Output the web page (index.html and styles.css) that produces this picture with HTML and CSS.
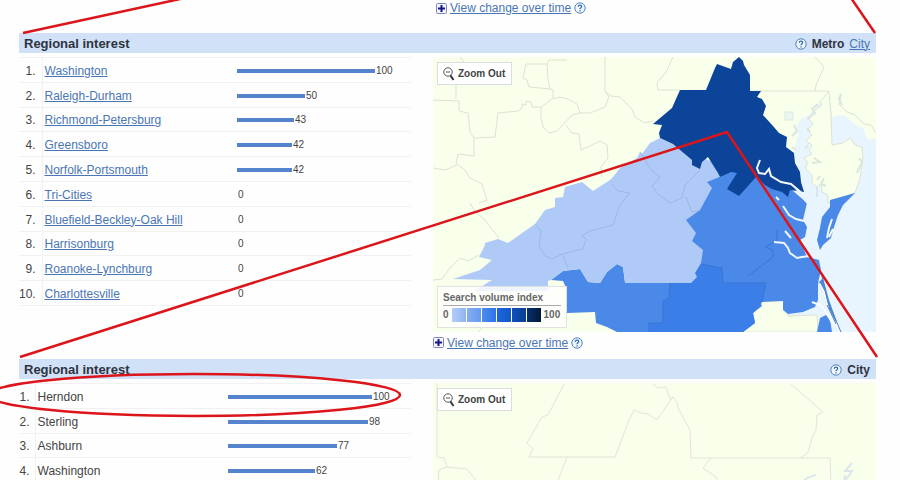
FILE: index.html
```html
<!DOCTYPE html>
<html lang="en">
<head>
<meta charset="utf-8">
<title>Regional interest</title>
<link rel="stylesheet" href="styles.css">
</head>
<body>
<svg class="defs" aria-hidden="true">
  <symbol id="plus" viewBox="0 0 11 11"><rect x=".5" y=".5" width="10" height="10" rx="1" fill="#f4f6ff" stroke="#7b86bd"/><path d="M5.5 2v7M2 5.5h7" stroke="#14148c" stroke-width="2"/></symbol>
  <symbol id="help" viewBox="0 0 12 12"><circle cx="6" cy="6" r="5.2" fill="#eef7ff" stroke="#5585b8"/><path d="M4.3 4.7C4.3 2.6 7.7 2.7 7.7 4.6 7.7 5.8 6 5.8 6 7.3M6 8.3v1.3" fill="none" stroke="#2f68a8" stroke-width="1.2"/></symbol>
  <symbol id="lens" viewBox="0 0 12 14"><circle cx="5" cy="5" r="4.2" fill="#fff" stroke="#555"/><path d="M3 5h4" stroke="#555"/><path d="M7.5 8.5l3 4.5" stroke="#333" stroke-width="2"/></symbol>
</svg>
<main class="page">
  <div class="change change-top">
    <svg class="plus"><use href="#plus"/></svg><a href="#over-time">View change over time</a><svg class="help"><use href="#help"/></svg>
  </div>

  <section>
    <header class="bar-head">
      <h2>Regional interest</h2>
      <div class="scope"><svg class="help"><use href="#help"/></svg><b>Metro</b> <a href="#city">City</a></div>
    </header>
    <div class="columns">
      <table class="ranks metro">
        <tr><td class="n">1.</td><td class="name"><a href="#r1">Washington</a></td><td><div class="value"><i style="width:138px"></i>100</div></td></tr>
        <tr><td class="n">2.</td><td class="name"><a href="#r2">Raleigh-Durham</a></td><td><div class="value"><i style="width:68px"></i>50</div></td></tr>
        <tr><td class="n">3.</td><td class="name"><a href="#r3">Richmond-Petersburg</a></td><td><div class="value"><i style="width:57px"></i>43</div></td></tr>
        <tr><td class="n">4.</td><td class="name"><a href="#r4">Greensboro</a></td><td><div class="value"><i style="width:55px"></i>42</div></td></tr>
        <tr><td class="n">5.</td><td class="name"><a href="#r5">Norfolk-Portsmouth</a></td><td><div class="value"><i style="width:55px"></i>42</div></td></tr>
        <tr><td class="n">6.</td><td class="name"><a href="#r6">Tri-Cities</a></td><td><div class="value"><i style="width:0px"></i>0</div></td></tr>
        <tr><td class="n">7.</td><td class="name"><a href="#r7">Bluefield-Beckley-Oak Hill</a></td><td><div class="value"><i style="width:0px"></i>0</div></td></tr>
        <tr><td class="n">8.</td><td class="name"><a href="#r8">Harrisonburg</a></td><td><div class="value"><i style="width:0px"></i>0</div></td></tr>
        <tr><td class="n">9.</td><td class="name"><a href="#r9">Roanoke-Lynchburg</a></td><td><div class="value"><i style="width:0px"></i>0</div></td></tr>
        <tr><td class="n">10.</td><td class="name"><a href="#r10">Charlottesville</a></td><td><div class="value"><i style="width:0px"></i>0</div></td></tr>
      </table>
      <div>
        <div class="map">
          <svg class="land" viewBox="433 57 443 275" role="img" aria-label="Search volume by metro area">
            <rect x="433" y="57" width="443" height="275" fill="#f8ffea"/>
            <g fill="none" stroke="#dce3d3">
              <path d="M433 100L459 101 459 111 468 113 470 132 474 138 495 137 498 113 518 111 522 108 522 104 526 105 526 101 531 102 532 107 541 107 552 99M456 89L456 99M456 89L456 82M526 64L523 78 527 80 529 87 550 89 548 79 547 64ZM547 64L549 60 567 60M550 89L553 90 553 99 559 97 568 99 577 104 580 113 572 115 557 131 549 133 543 127 541 118 541 107M605 57L605 91 611 96 620 97 632 109 635 117 644 123 653 121M605 91L609 97 605 107 590 113 580 113"/>
              <path d="M566 125L572 133 579 134 581 150 592 145 600 141 607 145 608 158 601 167 602 177M474 138L474 156 458 154 456 163 465 170 470 178 482 184 487 200 479 203M433 168L445 170 457 165M470 203L475 212 483 218 499 238M433 280L442 279 450 268 460 258 468 261 479 255M673 57L666 72 657 83 658 90 680 90M750 91L828 91 831 115 832 163 825 175M815 57L824 67 816 85 815 91M841 95L839 104 847 112 855 115 864 124 871 125 876 133M478 332L482 328M460 57L464 62"/>
            </g>
            <path d="M831 117L842 115 847 117 855 125 863 128 868 140 876 138 876 332 833 332 817 332 818 316 788 316 784 290 800 240 800 200 790 192 803 187 800 173 795 157 795 147 798 135 797 125 802 118 808 116 815 108 820 102 829 100Z" fill="#e8f5fe"/>
            <path d="M829 91L820 102 822 105 815 110 809 119 813 124 807 130 812 135 806 141 812 145 809 151 812 154 804 158 808 163 805 168 812 175 812 183 817 187 821 183 822 192 828 195 828 203 855 193 860 178 863 157 862 147 855 145 850 138 843 143 832 145 831 115Z" fill="#f8ffea" stroke="#dce3d3"/>
            <path d="M818 104L812 109 815 113 807 119M807 128L810 132M808 145L805 149M814 158L820 162 812 163M820 176L817 180M824 178L821 184 826 186M859 158L862 162 857 173M841 94L839 99 842 105M794 125L797 131 792 136M792 147L796 150" fill="none" stroke="#dce6dc" stroke-width="2"/>
            <rect x="785" y="112" width="8" height="8" fill="#ebf5ee" stroke="#dce8e4"/>
            <path d="M817 187L817 197" stroke="#c6d6dc" stroke-width="1"/>
            <path d="M760 300L784 300 788 316 817 315 818 332 742 332Z" fill="#f8ffea" stroke="#dce3d3"/>
            <path d="M551 280L563 271 580 269 588 282 600 283 607 272 617 264 623 267 625 282 640 282 650 200 700 160 740 165 770 175 792 190 807 203 803 220 807 227 805 237 800 240 807 257 819 260 821 270 818 283 818 300 815 307 803 312 788 314 783 310 783 301 760 302 762 306 753 313 755 323 743 332 617 332 607 327 596 323 595 312 567 313 567 290 563 281Z" fill="#4b89e8"/>
            <path d="M670 283L691 283 695 273 701 264 722 268 723 283 766 283 762 302 760 306 753 313 755 323 743 332 649 332 649 323 663 323 663 301 669 298Z" fill="#3b7ee8"/>
            <path d="M670 283L669 298 663 301 663 323 649 323 649 332M701 264L722 268 723 283 766 283 762 302M748 276L773 257 773 250 765 247 777 241 777 230" fill="none" stroke="#3a75d1"/>
            <path d="M453 279L480 270 492 260 479 257 485 245 485 243 498 239 508 243 535 224 545 210 555 207 555 198 563 197 565 187 582 182 593 191 610 180 613 177 620 168 637 158 640 152 642 154 650 143 660 138 719 165 722 176 707 182 712 188 700 210 686 220 696 233 692 241 703 250 701 263 695 273 697 277 691 283 625 283 623 267 617 264 607 272 600 283 588 282 580 269 563 271 551 280 548 281 548 291 474 291 492 280Z" fill="#b0caf7"/>
            <path d="M535 224L541 231 539 246 545 256 552 259 562 254 568 268M562 254L583 249 586 239 582 236 590 231 613 225 620 205 630 193 618 191 612 184M640 152L651 170 660 177 652 186 659 195 670 203 682 198 685 185 700 170M686 197L692 212 700 210" fill="none" stroke="#9db8e3"/>
            <path d="M680 90L706 90 715 68 717 64 731 69 733 62 739 57 743 61 744 65 750 75 750 91 761 91 757 97 762 99 766 106 763 115 773 126 779 133 787 137 786 147 794 153 795 163 800 172 801 182 804 192 790 190 788 197 782 192 772 189 765 185 756 177 739 196 727 189 737 173 731 172 720 177 718 173 708 157 702 162 700 169 692 165 692 160 673 144 660 138 659 133 662 125 653 124 672 108Z" fill="#0b4499"/>
            <path d="M760 160L757 168 759 173 765 174 769 169 771 176 781 182 791 184 803 194" fill="none" stroke="#f2faff" stroke-width="2"/>
            <path d="M793 186L808 198 807 204 802 198Z" fill="#e8f5fe"/>
            <path d="M783 206L789 215 796 219 804 221M785 231L791 238M774 242L784 243 788 248 790 253 797 258 802 257 809 256M776 197L779 200" fill="none" stroke="#edf7ff" stroke-width="2"/>
            <path d="M830 200L855 193 843 205 838 215 834 227 831 238 823 245 820 250 817 240 820 228 822 217 830 207ZM820 318L826 315 830 319 832 332 817 332ZM818 283L824 294 826 304 833 320 837 322 829 300 823 278Z" fill="#4b89e8"/>
            <path d="M832 219L829 228 827 238M833 229L829 237" fill="none" stroke="#f4fbff" stroke-width="2"/>
            <path d="M819 283L824 292 828 309 837 327M812 302L822 306 827 314 834 326" fill="none" stroke="#f8fcff" stroke-width="2"/>
            <path d="M821 272L828 302 841 332M827 305L836 324" fill="none" stroke="#5882b5"/>
          </svg>
          <button class="zoom" type="button"><svg><use href="#lens"/></svg>Zoom Out</button>
          <div class="legend">
            <h3>Search volume index</h3>
            <div class="scale"><span>0</span><ul><li></li><li></li><li></li><li></li><li></li><li></li></ul><span>100</span></div>
          </div>
        </div>
        <div class="change">
          <svg class="plus"><use href="#plus"/></svg><a href="#over-time">View change over time</a><svg class="help"><use href="#help"/></svg>
        </div>
      </div>
    </div>
  </section>

  <section>
    <header class="bar-head">
      <h2>Regional interest</h2>
      <div class="scope"><svg class="help"><use href="#help"/></svg><b>City</b></div>
    </header>
    <div class="columns">
      <table class="ranks city">
        <tr><td class="n">1.</td><td class="name">Herndon</td><td><div class="value"><i style="width:144px"></i>100</div></td></tr>
        <tr><td class="n">2.</td><td class="name">Sterling</td><td><div class="value"><i style="width:140px"></i>98</div></td></tr>
        <tr><td class="n">3.</td><td class="name">Ashburn</td><td><div class="value"><i style="width:109px"></i>77</div></td></tr>
        <tr><td class="n">4.</td><td class="name">Washington</td><td><div class="value"><i style="width:87px"></i>62</div></td></tr>
      </table>
      <div class="map">
        <svg class="land" viewBox="433 383 443 100" role="img" aria-label="Search volume by city">
          <rect x="433" y="383" width="443" height="100" fill="#f8ffea"/>
          <path d="M437 383L437 457 444 458 447 467 467 469 478 483M447 467L439 470 438 483M564 384L548 415 542 417 527 443 533 449 529 457 615 457 629 420 634 410 641 413 648 414 657 420 673 397M567 457L557 483M653 384L658 388 666 387 670 399 673 397 677 402 678 408 690 430 691 458 830 458 831 483M791 384L823 412 817 415 816 430 812 438 808 452 801 458M711 458L703 468 716 477 718 483" fill="none" stroke="#e0e6d8"/>
          <path d="M816 475L807 478 802 483M852 463L845 471 852 471 845 481M845 475L844 483" fill="none" stroke="#dde6e8" stroke-width="2"/>
        </svg>
        <button class="zoom" type="button"><svg><use href="#lens"/></svg>Zoom Out</button>
      </div>
    </div>
  </section>

  <svg class="marks" viewBox="0 0 900 480" aria-hidden="true">
    <path d="M23 33L180-1M851-2l24 35M20 357L727 132 877 357"/>
    <ellipse cx="194" cy="395" rx="206" ry="21"/>
  </svg>
</main>
</body>
</html>
```
FILE: styles.css
```css
* { box-sizing: border-box; }
body {
  margin: 0;
  background: #fefefe;
  color: #444;
  font: 12px/16px "Liberation Sans", Arial, sans-serif;
}
.defs { display: none; }
.page {
  position: relative;
  height: 100vh;
  padding: 0 24px 0 19px;
  overflow: hidden;
}
a { color: #4a76b4; }
h2, h3 { margin: 0; }

.change {
  display: flex;
  align-items: center;
  gap: 3px;
  height: 27px;
  padding-bottom: 6px;
}
.change-top {
  height: 33px;
  padding: 0 0 17px 417px;
}
.plus { width: 11px; height: 11px; }
.help { width: 12px; height: 12px; }

.bar-head {
  display: flex;
  align-items: center;
  justify-content: space-between;
  height: 20px;
  padding: 1px 6px 0 5px;
  background: #d1e1f7;
  color: #2d3440;
}
.bar-head h2 { font-size: 13px; line-height: 20px; }
.scope { display: flex; align-items: center; gap: 5px; }

.columns {
  display: grid;
  grid-template-columns: 392px 1fr;
  column-gap: 22px;
  align-items: start;
  padding-top: 4px;
}

.ranks {
  width: 100%;
  border-collapse: collapse;
  table-layout: fixed;
}
.metro { height: 249px; }
.city { height: 100px; }
.ranks td {
  padding: 2px 0 0;
  border-top: 1px solid #f1f1f1;
  border-bottom: 1px solid #f1f1f1;
}
.ranks .n {
  width: 23px;
  padding-right: 6px;
  border-right: 1px solid #f1f1f1;
  text-align: right;
  white-space: nowrap;
}
.ranks .name { width: 195px; padding-left: 2px; }
.city .n { width: 16px; padding-right: 5px; }
.city .name { width: 193px; }
.value {
  display: flex;
  align-items: center;
  gap: 1px;
  font-size: 10px;
}
.value i { height: 4px; background: #5583cd; }

.map { position: relative; }
.land { display: block; width: 100%; height: auto; }
.zoom {
  position: absolute;
  top: 5px;
  left: 4px;
  display: flex;
  align-items: center;
  gap: 3px;
  height: 23px;
  padding: 0 6px 0 5px;
  border: 1px solid #dcdcdc;
  background: #fff;
  color: #444;
  font: bold 10px/16px "Liberation Sans", Arial, sans-serif;
}
.zoom svg { width: 12px; height: 14px; }

.legend {
  position: absolute;
  bottom: 4px;
  left: 4px;
  width: 130px;
  padding: 4px 5px;
  border: 1px solid #e2e2e2;
  background: rgba(255, 255, 255, .8);
  color: #666;
  font-size: 10px;
  font-weight: bold;
}
.legend h3 {
  border-bottom: 1px solid #aaa;
  font-size: 10px;
  line-height: 14px;
}
.scale {
  display: flex;
  align-items: center;
  gap: 3px;
  margin-top: 1px;
}
.scale ul {
  display: flex;
  gap: 1px;
  margin: 0;
  padding: 0;
  list-style: none;
}
.scale li { width: 14px; height: 14px; background: linear-gradient(90deg, #b4cdf8, #8fb4f3); }
.scale li:nth-child(2) { background: linear-gradient(90deg, #86aef0, #659af0); }
.scale li:nth-child(3) { background: linear-gradient(90deg, #4f8cee, #2e73e8); }
.scale li:nth-child(4) { background: linear-gradient(90deg, #1c66df, #1258c8); }
.scale li:nth-child(5) { background: linear-gradient(90deg, #0f50b8, #0a3f95); }
.scale li:nth-child(6) { background: linear-gradient(90deg, #08306f, #021838); }

.marks {
  position: absolute;
  top: 0;
  left: 0;
  width: 900px;
  height: 480px;
  pointer-events: none;
}
.marks * { fill: none; stroke: #dc151b; stroke-width: 2.5; }
```
